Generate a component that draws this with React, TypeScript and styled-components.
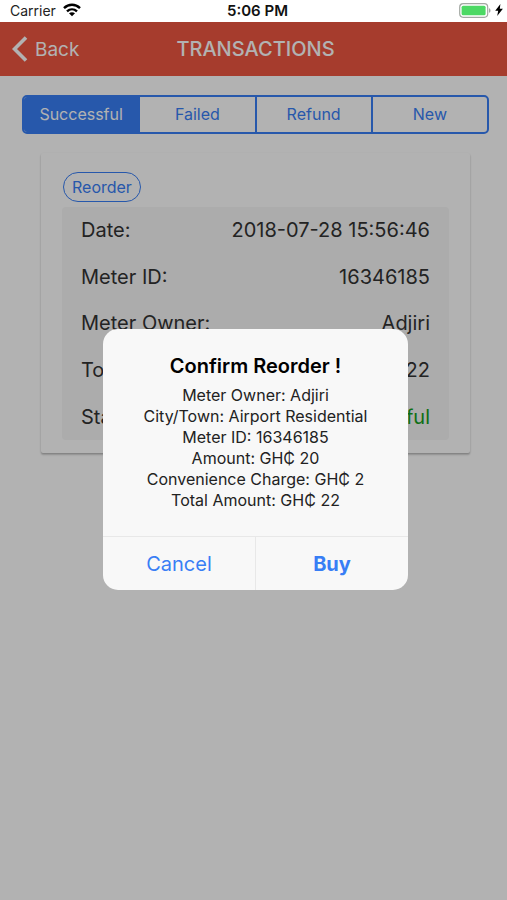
import React, { useState } from "react";
import styled, { createGlobalStyle } from "styled-components";

const GlobalStyle = createGlobalStyle`
  *, *::before, *::after { box-sizing: border-box; }
  body {
    margin: 0;
    background: #fff;
    color: #333;
    font-family: Inter, "Liberation Sans", sans-serif;
  }
  button { font: inherit; margin: 0; cursor: pointer; }
`;

const BLUE = "#387ef5";

const Screen = styled.div`
  display: flex;
  flex-direction: column;
  min-height: 100vh;
`;

const StatusBar = styled.div`
  display: grid;
  grid-template-columns: 1fr auto 1fr;
  align-items: center;
  height: 22px;
  padding: 0 4px 2px 10px;
  background: #fff;
  color: #222;
  font-size: 14px;
`;

const Carrier = styled.div`
  display: flex;
  align-items: center;
  gap: 7px;
`;

const Clock = styled.div`
  padding-left: 2px;
  color: #111;
  font-size: 15px;
  font-weight: 600;
`;

const Power = styled.div`
  display: flex;
  justify-content: flex-end;
  align-items: center;
  gap: 4px;
`;

const AppArea = styled.div`
  position: relative;
  flex: 1;
`;

const Header = styled.header`
  display: grid;
  grid-template-columns: 1fr auto 1fr;
  align-items: center;
  height: 54px;
  padding: 0 8px 0 12px;
  background: #ee5641;
  color: #fff;
`;

const BackButton = styled.button`
  display: flex;
  align-items: center;
  justify-self: start;
  gap: 7px;
  padding: 0;
  border: 0;
  background: none;
  color: inherit;
  font-size: 19px;
`;

const Title = styled.h1`
  margin: 0;
  font-size: 20px;
  font-weight: 500;
`;

const Content = styled.main`
  padding: 19px 18px 40px 22px;
`;

const Segments = styled.div`
  display: flex;
  height: 39px;
  border: 2px solid ${BLUE};
  border-radius: 5px;
  overflow: hidden;
`;

const Segment = styled.button<{ $active: boolean }>`
  flex: 1;
  padding: 0 0 1px;
  border: 0;
  border-left: 2px solid ${BLUE};
  background: ${(p) => (p.$active ? BLUE : "transparent")};
  color: ${(p) => (p.$active ? "#fff" : BLUE)};
  font-size: 16px;
  &:first-child { border-left: 0; }
`;

const Card = styled.section`
  margin: 19px 19px 0;
  padding: 19px 21px 13px;
  border-radius: 2px;
  box-shadow: 0 2px 2px rgba(0, 0, 0, 0.16), 0 1px 2px rgba(0, 0, 0, 0.16);
`;

const ReorderButton = styled.button`
  display: block;
  height: 30px;
  margin: 0 0 5px 1px;
  padding: 0 8px;
  border: 1px solid ${BLUE};
  border-radius: 15px;
  background: none;
  color: ${BLUE};
  font-size: 16px;
`;

const Details = styled.dl`
  display: grid;
  grid-auto-rows: 1fr;
  min-height: 233px;
  margin: 0;
  padding: 0 19px;
  border-radius: 4px;
  background: #f6f6f6;
  font-size: 20px;
`;

const Detail = styled.div`
  display: flex;
  justify-content: space-between;
  align-items: center;
`;

const Value = styled.dd<{ $positive?: boolean }>`
  margin: 0;
  color: ${(p) => (p.$positive ? "#14a01e" : "inherit")};
`;

const Scrim = styled.div`
  position: absolute;
  inset: 0;
  display: flex;
  justify-content: center;
  align-items: center;
  padding: 0 0 3px 4px;
  background: rgba(0, 0, 0, 0.3);
`;

const Dialog = styled.div`
  width: 80%;
  max-width: 305px;
  border-radius: 15px;
  background: #f8f8f8;
  text-align: center;
  overflow: hidden;
`;

const DialogBody = styled.div`
  padding: 24px 16px 25px;
`;

const DialogTitle = styled.h2`
  margin: 0 0 6px;
  color: #000;
  font-size: 20px;
  line-height: 26px;
  font-weight: 600;
`;

const Line = styled.p`
  margin: 0;
  color: #222;
  font-size: 16px;
  line-height: 21px;
`;

const DialogActions = styled.div`
  display: flex;
  border-top: 1px solid #e8e8e8;
`;

const DialogButton = styled.button<{ $strong?: boolean }>`
  flex: 1;
  height: 53px;
  padding: 0;
  border: 0;
  background: none;
  color: ${BLUE};
  font-size: 20px;
  font-weight: ${(p) => (p.$strong ? 700 : 400)};
  & + & { border-left: 1px solid #e8e8e8; }
`;

const WifiIcon = () => (
  <svg width="18" height="14" viewBox="0 0 18 14" aria-hidden="true">
    <g fill="none" stroke="#000" strokeWidth="2.4">
      <path d="M1 5.2C5.6 .7 12.4 .7 17 5.2" />
      <path d="M4 8.4C6.9 5.7 11.1 5.7 14 8.4" />
    </g>
    <path d="M9 13.2 6 10.3C7.8 8.8 10.2 8.8 12 10.3Z" />
  </svg>
);

const BatteryIcon = () => (
  <svg width="32" height="15" viewBox="0 0 32 15" aria-hidden="true">
    <rect x=".7" y=".7" width="28" height="13.6" rx="3.5" fill="#fff" stroke="#a3a8a3" strokeWidth="1.2" />
    <rect x="2.6" y="2.8" width="24" height="9.4" rx="1.5" fill="#4cd964" />
    <path d="M30 5.2C32 5.8 32 9.2 30 9.8Z" fill="#a3a8a3" />
  </svg>
);

const BoltIcon = () => (
  <svg width="8" height="12" viewBox="0 0 8 12" aria-hidden="true">
    <path d="M5.4 0 .2 6.8H3.2L2.2 12 7.9 4.8H4.8Z" />
  </svg>
);

const BackIcon = () => (
  <svg width="16" height="26" viewBox="0 0 16 26" aria-hidden="true">
    <path d="M14 1.5 2.5 13 14 24.5" fill="none" stroke="#fff" strokeWidth="3.6" />
  </svg>
);

const tabs = ["Successful", "Failed", "Refund", "New"];

const details = [
  { label: "Date:", value: "2018-07-28 15:56:46" },
  { label: "Meter ID:", value: "16346185" },
  { label: "Meter Owner:", value: "Adjiri" },
  { label: "Total:", value: "22" },
  { label: "Status:", value: "Successful", positive: true },
];

const summary = [
  "Meter Owner: Adjiri",
  "City/Town: Airport Residential",
  "Meter ID: 16346185",
  "Amount: GH₵ 20",
  "Convenience Charge: GH₵ 2",
  "Total Amount: GH₵ 22",
];

export default function App() {
  const [tab, setTab] = useState(tabs[0]);
  const [confirming, setConfirming] = useState(true);
  const close = () => setConfirming(false);

  return (
    <Screen>
      <GlobalStyle />
      <StatusBar>
        <Carrier>Carrier <WifiIcon /></Carrier>
        <Clock>5:06 PM</Clock>
        <Power><BatteryIcon /><BoltIcon /></Power>
      </StatusBar>
      <AppArea>
        <Header>
          <BackButton><BackIcon />Back</BackButton>
          <Title>TRANSACTIONS</Title>
        </Header>
        <Content>
          <Segments>
            {tabs.map((name) => (
              <Segment key={name} $active={name === tab} aria-pressed={name === tab} onClick={() => setTab(name)}>
                {name}
              </Segment>
            ))}
          </Segments>
          <Card>
            <ReorderButton onClick={() => setConfirming(true)}>Reorder</ReorderButton>
            <Details>
              {details.map((d) => (
                <Detail key={d.label}>
                  <dt>{d.label}</dt>
                  <Value $positive={d.positive}>{d.value}</Value>
                </Detail>
              ))}
            </Details>
          </Card>
        </Content>
        {confirming && (
          <Scrim>
            <Dialog role="alertdialog" aria-modal="true" aria-labelledby="confirm-title">
              <DialogBody>
                <DialogTitle id="confirm-title">Confirm Reorder !</DialogTitle>
                {summary.map((line) => <Line key={line}>{line}</Line>)}
              </DialogBody>
              <DialogActions>
                <DialogButton onClick={close}>Cancel</DialogButton>
                <DialogButton $strong onClick={close}>Buy</DialogButton>
              </DialogActions>
            </Dialog>
          </Scrim>
        )}
      </AppArea>
    </Screen>
  );
}
